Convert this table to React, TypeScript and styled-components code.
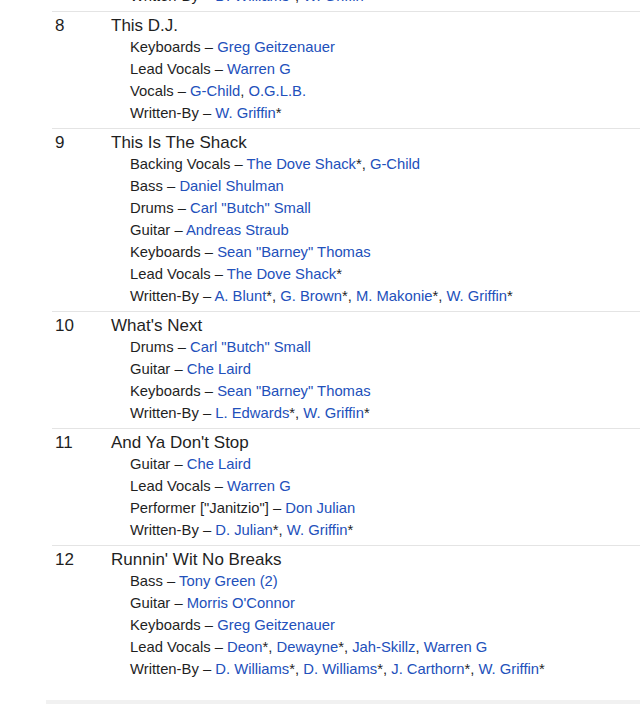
import React from "react";
import styled, { createGlobalStyle } from "styled-components";

const GlobalStyle = createGlobalStyle`
  html, body { margin: 0; padding: 0; background: #ffffff; }
  body { font-family: "Liberation Sans", Arial, Helvetica, sans-serif; color: #1f1f1f; overflow: hidden; }
`;

type Artist = { name: string; star?: boolean };
type Credit = { role: string; artists: Artist[] };
type Track = { pos: string; title: string; credits: Credit[] };

const a = (name: string, star = false): Artist => ({ name, star });

const tracks: Track[] = [
  {
    pos: "8",
    title: "This D.J.",
    credits: [
      { role: "Keyboards", artists: [a("Greg Geitzenauer")] },
      { role: "Lead Vocals", artists: [a("Warren G")] },
      { role: "Vocals", artists: [a("G-Child"), a("O.G.L.B.")] },
      { role: "Written-By", artists: [a("W. Griffin", true)] },
    ],
  },
  {
    pos: "9",
    title: "This Is The Shack",
    credits: [
      { role: "Backing Vocals", artists: [a("The Dove Shack", true), a("G-Child")] },
      { role: "Bass", artists: [a("Daniel Shulman")] },
      { role: "Drums", artists: [a('Carl "Butch" Small')] },
      { role: "Guitar", artists: [a("Andreas Straub")] },
      { role: "Keyboards", artists: [a('Sean "Barney" Thomas')] },
      { role: "Lead Vocals", artists: [a("The Dove Shack", true)] },
      {
        role: "Written-By",
        artists: [a("A. Blunt", true), a("G. Brown", true), a("M. Makonie", true), a("W. Griffin", true)],
      },
    ],
  },
  {
    pos: "10",
    title: "What's Next",
    credits: [
      { role: "Drums", artists: [a('Carl "Butch" Small')] },
      { role: "Guitar", artists: [a("Che Laird")] },
      { role: "Keyboards", artists: [a('Sean "Barney" Thomas')] },
      { role: "Written-By", artists: [a("L. Edwards", true), a("W. Griffin", true)] },
    ],
  },
  {
    pos: "11",
    title: "And Ya Don't Stop",
    credits: [
      { role: "Guitar", artists: [a("Che Laird")] },
      { role: "Lead Vocals", artists: [a("Warren G")] },
      { role: 'Performer ["Janitzio"]', artists: [a("Don Julian")] },
      { role: "Written-By", artists: [a("D. Julian", true), a("W. Griffin", true)] },
    ],
  },
  {
    pos: "12",
    title: "Runnin' Wit No Breaks",
    credits: [
      { role: "Bass", artists: [a("Tony Green (2)")] },
      { role: "Guitar", artists: [a("Morris O'Connor")] },
      { role: "Keyboards", artists: [a("Greg Geitzenauer")] },
      {
        role: "Lead Vocals",
        artists: [a("Deon", true), a("Dewayne", true), a("Jah-Skillz"), a("Warren G")],
      },
      {
        role: "Written-By",
        artists: [a("D. Williams", true), a("D. Williams", true), a("J. Carthorn", true), a("W. Griffin", true)],
      },
    ],
  },
];

const Page = styled.div`
  padding-left: 46px;
  width: 594px;
`;

const Tracklist = styled.div`
  margin-top: -15px;
  margin-left: 6px;
`;

const PartialRow = styled.div`
  display: grid;
  grid-template-columns: 56px 1fr;
  padding: 0 0 4px;
`;

const TrackRow = styled.div<{ $last?: boolean }>`
  display: grid;
  grid-template-columns: 56px 1fr;
  border-top: 1px solid #e4e4e4;
  padding: 4px 0 ${(p) => (p.$last ? "20px" : "4px")};
`;

const Position = styled.div`
  padding-left: 3px;
  font-size: 17px;
  line-height: 20px;
  color: #1f1f1f;
`;

const Body = styled.div`
  padding-left: 3px;
`;

const Title = styled.div`
  font-size: 17px;
  line-height: 20px;
  color: #1f1f1f;
`;

const CreditList = styled.div`
  padding-left: 19px;
`;

const CreditLine = styled.div`
  font-size: 14.8px;
  line-height: 22px;
  color: #1f1f1f;
  white-space: nowrap;
`;

const ArtistLink = styled.a`
  color: #2250bb;
  text-decoration: none;
`;

const Footer = styled.div`
  height: 20px;
  background: #f1f1f1;
`;

function CreditRow({ credit }: { credit: Credit }) {
  return (
    <CreditLine>
      {credit.role} –{" "}
      {credit.artists.map((ar, i) => (
        <React.Fragment key={i}>
          {i > 0 && ", "}
          <ArtistLink href="#">{ar.name}</ArtistLink>
          {ar.star && "*"}
        </React.Fragment>
      ))}
    </CreditLine>
  );
}

export default function App() {
  return (
    <>
      <GlobalStyle />
      <Page>
        <Tracklist>
          <PartialRow>
            <div />
            <Body>
              <CreditList>
                <CreditRow
                  credit={{ role: "Written-By", artists: [a("D. Williams", true), a("W. Griffin", true)] }}
                />
              </CreditList>
            </Body>
          </PartialRow>
          {tracks.map((t, i) => (
            <TrackRow key={t.pos} $last={i === tracks.length - 1}>
              <Position>{t.pos}</Position>
              <Body>
                <Title>{t.title}</Title>
                <CreditList>
                  {t.credits.map((c, j) => (
                    <CreditRow key={j} credit={c} />
                  ))}
                </CreditList>
              </Body>
            </TrackRow>
          ))}
        </Tracklist>
        <Footer />
      </Page>
    </>
  );
}
